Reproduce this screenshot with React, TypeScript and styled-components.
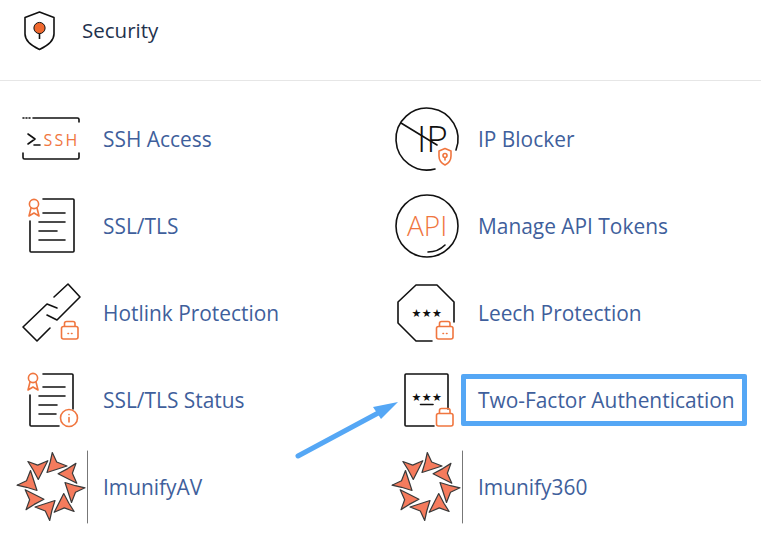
import React from "react";
import styled, { createGlobalStyle } from "styled-components";

const GlobalStyle = createGlobalStyle`
  html, body {
    margin: 0;
    padding: 0;
    background: #fff;
    font-family: "Open Sans", "Liberation Sans", sans-serif;
  }
`;

const Page = styled.div`
  position: relative;
  width: 761px;
  height: 539px;
  overflow: hidden;
`;
const Header = styled.div`
  display: flex;
  align-items: center;
  gap: 23px;
  height: 62px;
  padding: 0 0 18px 19px;
  border-bottom: 1px solid #e6e6e6;
`;
const HeaderIcon = styled.svg`
  width: 40px;
  height: 44px;
  flex: none;
`;
const Title = styled.div`
  font-size: 20.5px;
  color: #1f324d;
  padding-bottom: 2px;
`;
const Grid = styled.div`
  display: grid;
  grid-template-columns: 375px 1fr;
  grid-auto-rows: 87px;
  padding-top: 14px;
`;
const Cell = styled.div`
  display: flex;
  align-items: center;
  gap: 8px;
  padding-left: 15px;
`;
const Icon = styled.svg`
  width: 80px;
  height: 71px;
  flex: none;
  overflow: visible;
  fill: none;
  stroke: #111;
  stroke-width: 1.6;
  stroke-linecap: round;
  stroke-linejoin: round;
`;
const Label = styled.span<{ $highlighted?: boolean }>`
  position: relative;
  font-size: 20.9px;
  color: #3f5f9c;
  white-space: nowrap;
  &::after {
    content: "";
    display: ${(p) => (p.$highlighted ? "block" : "none")};
    position: absolute;
    top: -12px;
    bottom: -12px;
    left: -17px;
    right: -12px;
    border: 5px solid #55a7f5;
    border-radius: 2px;
  }
`;
const ArrowOverlay = styled.svg`
  position: absolute;
  left: 290px;
  top: 395px;
  width: 115px;
  height: 70px;
`;
const Orange = styled.g`
  stroke: #f0763f;
`;
const IconText = styled.text<{ $size: number }>`
  font-family: "Open Sans", "Liberation Sans", sans-serif;
  font-weight: 300;
  font-size: ${(p) => p.$size}px;
  stroke: none;
  fill: #111;
`;
const OrangeText = styled(IconText)`
  fill: #f0763f;
`;
const SshText = styled(OrangeText)`
  font-weight: 400;
  letter-spacing: 2.2px;
`;
const Stars = styled.text`
  font-family: "DejaVu Sans", sans-serif;
  font-size: 11px;
  letter-spacing: 0.4px;
  text-anchor: middle;
  stroke: none;
  fill: #111;
`;

const iconBox = "0 -1 80 71";

const Lock = ({ dots }: { dots?: boolean }) => (
  <Orange>
    <rect x="46.5" y="48.5" width="16.5" height="12.5" rx="2" />
    <path d="M49.5 48 v-2.5 a2 2 0 0 1 2 -2 h6.5 a2 2 0 0 1 2 2 v2.5" />
    {dots && <path d="M53 55.5 h.5 M56.5 55.5 h.5" />}
  </Orange>
);

const Ribbon = ({ x, y }: { x: number; y: number }) => (
  <Orange transform={`translate(${x} ${y})`}>
    <circle cx="0" cy="0" r="4.6" />
    <path d="M-3 4 L-5 12 L0 9 L5 12 L3 4" />
  </Orange>
);

const SshIcon = () => (
  <Icon viewBox={iconBox}>
    <path d="M8 14 h1 M11 14 h1 M14 14 h1" />
    <path d="M18 14 H62.5 a1.5 1.5 0 0 1 1.5 1.5 V18" />
    <path d="M8 49 V53.5 a1.5 1.5 0 0 0 1.5 1.5 H62.5 a1.5 1.5 0 0 0 1.5 -1.5 V49" />
    <path d="M13 30 L20 35 L13 40 M19 41 H25" />
    <SshText $size={16} x="28.5" y="41.5">
      SSH
    </SshText>
  </Icon>
);

const SslIcon = () => (
  <Icon viewBox={iconBox}>
    <path d="M28 8 H58 a1 1 0 0 1 1 1 V60 a1 1 0 0 1 -1 1 H16 a1 1 0 0 1 -1 -1 V30" />
    <path d="M28 22 H50 M24 31 H50 M24 40 H42 M24 49 H50" />
    <Ribbon x={19} y={13} />
  </Icon>
);

const HotlinkIcon = () => (
  <Icon viewBox={iconBox}>
    <path d="M39 19 L53 6 L65 19 L42 42 L32 37" />
    <path d="M32 26 L42 30 M35 50 L22 63 L8 49 L32 26" />
    <Lock dots />
  </Icon>
);

const SslStatusIcon = () => (
  <Icon viewBox={iconBox}>
    <path d="M28 9 H57 a1 1 0 0 1 1 1 V44" />
    <path d="M15 30 V60 a1 1 0 0 0 1 1 H44" />
    <path d="M28 22 H50 M24 31 H50 M24 40 H42 M24 49 H41" />
    <Ribbon x={18} y={13} />
    <Orange>
      <circle cx="54" cy="53" r="8.5" />
      <path d="M54 52.5 V57 M54 49.5 V49.6" />
    </Orange>
  </Icon>
);

const petals = [0, 45, 90, 135, 180, 225, 270, 315];

const ImunifyIcon = () => (
  <Icon viewBox={iconBox}>
    <g transform="translate(36 34.5)">
      {petals.map((angle) => (
        <polygon
          key={angle}
          points="1.3,-34 5.7,-24.5 16,-20.5 -4,-14 -0.8,-24.5"
          fill="#f57b5d"
          stroke="#3a3a3a"
          strokeWidth="1.2"
          transform={`rotate(${angle})`}
        />
      ))}
    </g>
    <path d="M72.5 -1 V71" stroke="#777" strokeWidth="1" />
  </Icon>
);

const IpIcon = () => (
  <Icon viewBox={iconBox}>
    <path d="M45 65 A31 31 0 1 1 66 46" />
    <path d="M11 19 L47 41" />
    <IconText $size={37} x="27" y="48">
      IP
    </IconText>
    <Orange>
      <path d="M55 44.5 L61 47 V52 C61 56 58 59.5 55 61 C52 59.5 49 56 49 52 V47 Z" />
      <circle cx="55" cy="51.5" r="2" />
      <path d="M55 53.5 V56" />
    </Orange>
  </Icon>
);

const ApiIcon = () => (
  <Icon viewBox={iconBox}>
    <circle cx="37" cy="35" r="31" />
    <path d="M38 61 C45 61 51 58 55 54" />
    <OrangeText $size={28} x="17" y="45">
      API
    </OrangeText>
  </Icon>
);

const LeechIcon = () => (
  <Icon viewBox={iconBox}>
    <path d="M42 63 H26 L8 45 V24 L26 7 H47 L64 24 V44" />
    <Stars x="37" y="39">
      ★★★
    </Stars>
    <Lock dots />
  </Icon>
);

const TwoFactorIcon = () => (
  <Icon viewBox={iconBox}>
    <path d="M44 61 H16 a1 1 0 0 1 -1 -1 V10 a1 1 0 0 1 1 -1 H57 a1 1 0 0 1 1 1 V44" />
    <Stars x="37" y="36">
      ★★★
    </Stars>
    <path d="M30.5 39.5 H43" />
    <Lock />
  </Icon>
);

const items = [
  { label: "SSH Access", icon: <SshIcon /> },
  { label: "IP Blocker", icon: <IpIcon /> },
  { label: "SSL/TLS", icon: <SslIcon /> },
  { label: "Manage API Tokens", icon: <ApiIcon /> },
  { label: "Hotlink Protection", icon: <HotlinkIcon /> },
  { label: "Leech Protection", icon: <LeechIcon /> },
  { label: "SSL/TLS Status", icon: <SslStatusIcon /> },
  { label: "Two-Factor Authentication", icon: <TwoFactorIcon />, highlighted: true },
  { label: "ImunifyAV", icon: <ImunifyIcon /> },
  { label: "Imunify360", icon: <ImunifyIcon /> },
];

const App = () => {
  return (
    <Page>
      <GlobalStyle />
      <Header>
        <HeaderIcon viewBox="0 0 40 44" fill="none">
          <path
            d="M20.5 3 L35 8.5 V25 C35 32 28 37 20.5 40.5 C13 37 6 32 6 25 V8.5 Z"
            stroke="#111"
            strokeWidth="1.6"
            strokeLinejoin="round"
          />
          <circle cx="20.5" cy="19" r="5.6" fill="#f0692f" stroke="#111" strokeWidth="1" />
          <path d="M20.5 24.5 V30" stroke="#111" strokeWidth="1.6" />
        </HeaderIcon>
        <Title>Security</Title>
      </Header>
      <Grid>
        {items.map((item) => (
          <Cell key={item.label}>
            {item.icon}
            <Label $highlighted={item.highlighted}>{item.label}</Label>
          </Cell>
        ))}
      </Grid>
      <ArrowOverlay viewBox="0 0 115 70">
        <path d="M8 61 L90 17" stroke="#55a7f5" strokeWidth="5" strokeLinecap="round" />
        <polygon points="108,7 83,12 91,24" fill="#55a7f5" />
      </ArrowOverlay>
    </Page>
  );
};

export default App;
